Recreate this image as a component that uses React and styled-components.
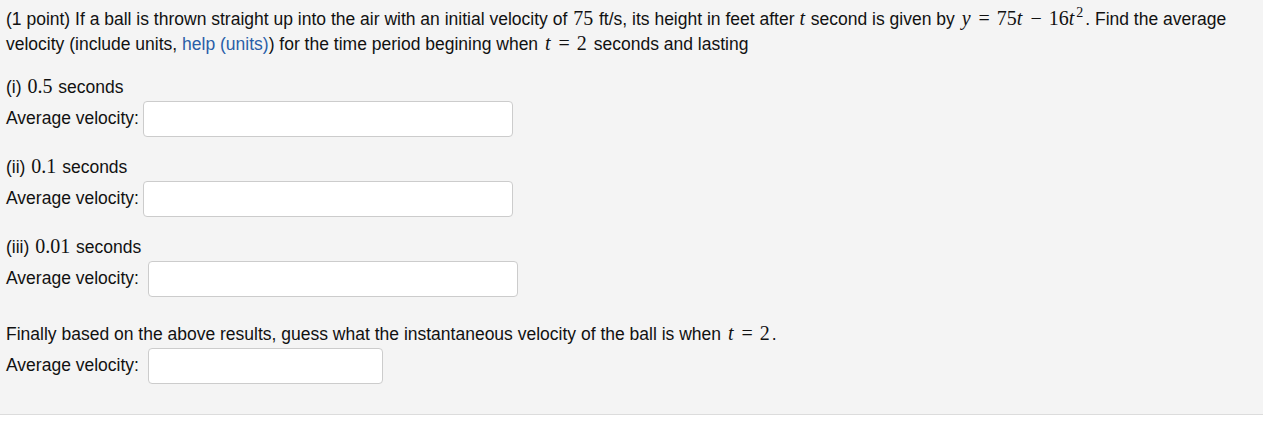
import React from "react";
import styled, { createGlobalStyle } from "styled-components";

const GlobalStyle = createGlobalStyle`
  html, body {
    margin: 0;
    padding: 0;
    background: #ffffff;
  }
`;

function Problem() {
  const parts = [
    { roman: "i", value: "0.5", shift: false },
    { roman: "ii", value: "0.1", shift: false },
    { roman: "iii", value: "0.01", shift: true },
  ];

  return (
    <Panel>
      <Intro>
        (1 point) If a ball is thrown straight up into the air with an initial velocity of <Num>75</Num> ft/s,
        its height in feet after <Var>t</Var> second is given by{" "}
        <Math>
          <Var>y</Var><Op>=</Op>75<Var>t</Var><Op>−</Op>16<Var>t</Var><Sup>2</Sup>
        </Math>
        . Find the average velocity (include units, <Link href="#">help (units)</Link>) for the time period
        begining when{" "}
        <Math>
          <Var>t</Var><Op>=</Op>2
        </Math>{" "}
        seconds and lasting
      </Intro>

      {parts.map((p) => (
        <Part key={p.roman}>
          <Line>
            ({p.roman}) <Num>{p.value}</Num> seconds
          </Line>
          <AnswerRow>
            <Label>Average velocity:</Label>
            <AnswerInput $shift={p.shift} />
          </AnswerRow>
        </Part>
      ))}

      <Final>
        <Line>
          Finally based on the above results, guess what the instantaneous velocity of the ball is when{" "}
          <Math>
            <Var>t</Var><Op>=</Op>2
          </Math>
          .
        </Line>
        <AnswerRow>
          <Label>Average velocity:</Label>
          <AnswerInput $shift $narrow />
        </AnswerRow>
      </Final>
    </Panel>
  );
}

export default function App() {
  return (
    <>
      <GlobalStyle />
      <Problem />
    </>
  );
}

const Panel = styled.div`
  background: #f4f4f4;
  border-bottom: 1px solid #dcdcdc;
  padding: 7px 6px 30px 6px;
  font-family: "Liberation Sans", Arial, sans-serif;
  font-size: 17.5px;
  color: #111;
`;

const Intro = styled.div`
  line-height: 25px;
  margin-bottom: 18px;
`;

const Link = styled.a`
  color: #2a5ea8;
  text-decoration: none;
`;

const Math = styled.span`
  font-family: "Liberation Serif", "DejaVu Serif", serif;
  font-size: 20px;
  line-height: 1;
  white-space: nowrap;
  margin: 0 2px;
`;

const Num = styled.span`
  font-family: "Liberation Serif", "DejaVu Serif", serif;
  font-size: 20px;
  line-height: 1;
  margin: 0 1px;
`;

const Var = styled.i`
  font-family: "Liberation Serif", "DejaVu Serif", serif;
  font-size: 20px;
  line-height: 1;
  padding-right: 1px;
`;

const Op = styled.span`
  padding: 0 7px;
`;

const Sup = styled.span`
  position: relative;
  top: -8px;
  font-size: 14px;
  line-height: 1;
  padding-left: 1px;
`;

const Part = styled.div`
  margin-bottom: 18px;
`;

const Final = styled.div`
  margin-top: 25px;
`;

const Line = styled.div`
  line-height: 24px;
  margin-bottom: 2px;
`;

const AnswerRow = styled.div`
  display: flex;
  align-items: center;
  height: 36px;
`;

const Label = styled.span`
  white-space: nowrap;
  position: relative;
  top: -1px;
`;

const AnswerInput = styled.input.attrs({ type: "text" })`
  box-sizing: border-box;
  margin-left: ${(p) => (p.$shift ? "9px" : "4px")};
  width: ${(p) => (p.$narrow ? "235px" : "370px")};
  height: 36px;
  border: 1px solid #cccccc;
  border-radius: 4px;
  background: #ffffff;
  outline: none;
`;
